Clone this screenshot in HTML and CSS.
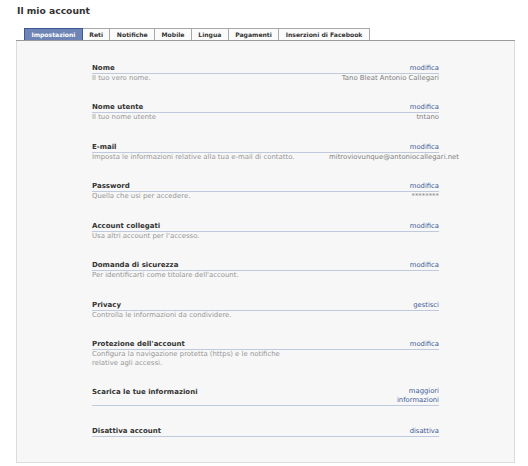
FILE: index.html
```html
<!DOCTYPE html>
<html lang="it">
<head>
<meta charset="utf-8">
<title>Il mio account</title>
<link rel="stylesheet" href="styles.css">
</head>
<body>
<div class="page">
  <h1 class="page-title">Il mio account</h1>
  <div class="tabs">
    <span class="tab active">Impostazioni</span>
    <span class="tab">Reti</span>
    <span class="tab">Notifiche</span>
    <span class="tab">Mobile</span>
    <span class="tab">Lingua</span>
    <span class="tab">Pagamenti</span>
    <span class="tab">Inserzioni di Facebook</span>
  </div>
  <div class="panel">
    <div class="settings">
      <div class="row">
        <div class="head"><span class="label">Nome</span><span class="link">modifica</span></div>
        <div class="desc"><span>Il tuo vero nome.</span><span class="value">Tano Bleat Antonio Callegari</span></div>
      </div>
      <div class="row">
        <div class="head"><span class="label">Nome utente</span><span class="link">modifica</span></div>
        <div class="desc"><span>Il tuo nome utente</span><span class="value">tntano</span></div>
      </div>
      <div class="row">
        <div class="head"><span class="label">E-mail</span><span class="link">modifica</span></div>
        <div class="desc"><span>Imposta le informazioni relative alla tua e-mail di contatto.</span><span class="value">mitroviovunque@antoniocallegari.net</span></div>
      </div>
      <div class="row">
        <div class="head"><span class="label">Password</span><span class="link">modifica</span></div>
        <div class="desc"><span>Quella che usi per accedere.</span><span class="value">********</span></div>
      </div>
      <div class="row">
        <div class="head"><span class="label">Account collegati</span><span class="link">modifica</span></div>
        <div class="desc"><span>Usa altri account per l'accesso.</span><span class="value"></span></div>
      </div>
      <div class="row">
        <div class="head"><span class="label">Domanda di sicurezza</span><span class="link">modifica</span></div>
        <div class="desc"><span>Per identificarti come titolare dell'account.</span><span class="value"></span></div>
      </div>
      <div class="row">
        <div class="head"><span class="label">Privacy</span><span class="link">gestisci</span></div>
        <div class="desc"><span>Controlla le informazioni da condividere.</span><span class="value"></span></div>
      </div>
      <div class="row">
        <div class="head"><span class="label">Protezione dell'account</span><span class="link">modifica</span></div>
        <div class="desc"><span>Configura la navigazione protetta (https) e le notifiche relative agli accessi.</span><span class="value"></span></div>
      </div>
      <div class="row">
        <div class="head"><span class="label">Scarica le tue informazioni</span><span class="link multi">maggiori<br>informazioni</span></div>
      </div>
      <div class="row">
        <div class="head"><span class="label">Disattiva account</span><span class="link">disattiva</span></div>
      </div>
    </div>
  </div>
</div>
</body>
</html>
```
FILE: styles.css
```css
html, body {
  margin: 0;
  padding: 0;
  background: #ffffff;
}

body {
  font-family: "DejaVu Sans", "Liberation Sans", sans-serif;
  color: #333333;
}

.page {
  padding: 5px 13px 0 16px;
}

.page-title {
  margin: 0 0 0 1px;
  font-size: 9.2px;
  line-height: 11px;
  font-weight: bold;
  color: #333333;
}

.tabs {
  display: flex;
  margin-top: 12px;
  padding-left: 8px;
  border-bottom: 1px solid #9a9a9a;
}

.tab {
  display: block;
  height: 11px;
  line-height: 11px;
  padding: 0 6.4px;
  font-size: 6.1px;
  font-weight: bold;
  color: #333333;
  background: #fbfbfb;
  border: 1px solid #a8a8a8;
  border-bottom: none;
  border-left: none;
}

.tab:first-child {
  border-left: 1px solid #a8a8a8;
}

.tab.active {
  background: #6d84b4;
  color: #ffffff;
  border-color: #3b5998;
  border-left: 1px solid #3b5998;
}

.panel {
  background: #f7f7f7;
  border: 1px solid #dcdcdc;
  border-top: none;
  padding: 22px 0 25px;
}

.settings {
  width: 347px;
  margin: 0 auto;
}

.row {
  margin-bottom: 19.43px;
}

.row:last-child {
  margin-bottom: 0;
}

.head {
  display: flex;
  justify-content: space-between;
  align-items: flex-start;
  border-bottom: 1px solid #c0cadf;
  line-height: 10px;
}

.label {
  font-size: 7px;
  font-weight: bold;
  color: #333333;
}

.link {
  font-size: 6.8px;
  color: #3b5998;
  text-align: right;
  cursor: pointer;
}

.link.multi {
  line-height: 9px;
}

.desc {
  display: grid;
  grid-template-columns: 1fr 110px;
  column-gap: 22px;
  font-size: 6.9px;
  line-height: 9px;
  color: #969696;
}

.value {
  text-align: right;
  white-space: nowrap;
  color: #7e7e7e;
}
```
